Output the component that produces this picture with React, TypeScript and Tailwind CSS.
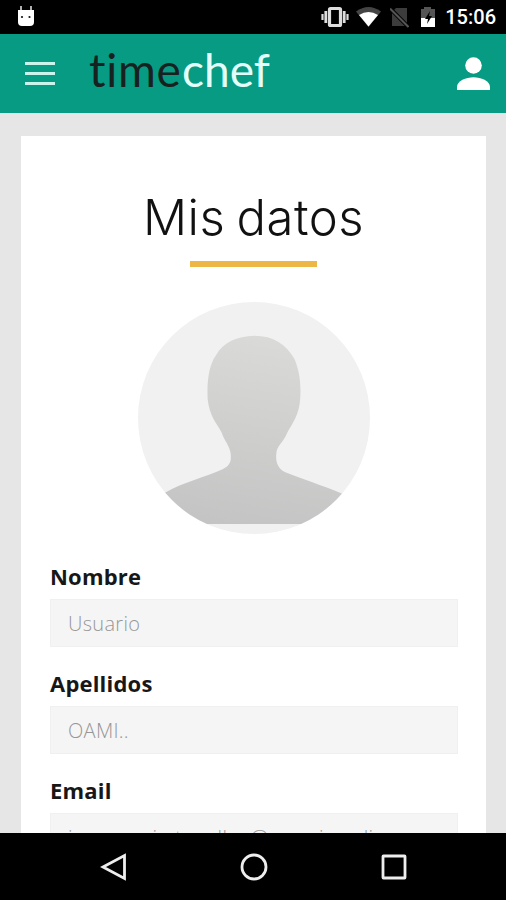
import type { ReactNode } from "react";

type FieldProps = {
    label: string;
    value: string;
};

const Field = ({ label, value }: FieldProps) => {
    return (
        <div className="h-[107px] shrink-0">
            <label className="block h-[37px] text-[22px] leading-[28px] font-bold tracking-[0.2px] text-[#171717]">{label}</label>
            <div className="flex h-[48px] items-center border border-[#f0f0f0] bg-[#f5f5f5] pt-[1px] pl-[17px] text-[20px] font-light tracking-[0.3px] whitespace-nowrap text-[#979797]">{value}</div>
        </div>
    );
};

const StatusBar = () => {
    return (
        <div className="flex h-[34px] shrink-0 items-center bg-black text-white">
            <svg className="mb-[2px] ml-[17px] h-[22px] w-[18px]" viewBox="0 0 18 22">
                <path d="M4 1v5M14 1v5" stroke="#ddd" strokeWidth="1.6" />
                <path d="M1 5h16v12q0 4-4 4H5q-4 0-4-4z" fill="#fff" />
                <circle cx="5" cy="12" r="1.1" fill="#111" />
                <circle cx="12.5" cy="12" r="1.1" fill="#111" />
            </svg>
            <div className="ml-auto flex items-center pr-[10px]">
                <svg className="h-[22px] w-[28px]" viewBox="0 0 28 22">
                    <rect x="8.5" y="2.5" width="11" height="17" rx="1" fill="#000" stroke="#ddd" strokeWidth="3.2" />
                    <path d="M4.8 5v12M23.2 5v12" stroke="#ddd" strokeWidth="2.8" />
                    <path d="M1.5 8v6M26.5 8v6" stroke="#ddd" strokeWidth="2.2" />
                </svg>
                <svg className="ml-[7px] h-[20px] w-[25px]" viewBox="0 0 25 20">
                    <path d="M0 4.5Q12.5-4.5 25 4.5L12.5 20z" fill="#444" />
                    <path d="M3 8Q12.5 2 22 8L12.5 19.5z" fill="#fff" />
                </svg>
                <svg className="ml-[9px] h-[21px] w-[19px]" viewBox="0 0 19 21">
                    <path d="M6 1h11v18H2V5z" fill="#3c3c3c" />
                    <path d="M0 1.5L18.5 20" stroke="#000" strokeWidth="4" />
                    <path d="M0 1.5L18.5 20" stroke="#555" strokeWidth="2" />
                </svg>
                <svg className="ml-[11px] h-[22px] w-[16px]" viewBox="0 0 16 22">
                    <path d="M1 3h3V1h7v2h4v18H1z" fill="#555" />
                    <path d="M1 12h14v9H1z" fill="#fff" />
                    <path d="M10 5l-5 8h3l-1 5 5-8H9z" fill="#000" />
                </svg>
                <span className="ml-[9px] font-['Roboto',sans-serif] text-[20px] leading-[36px] font-medium">15:06</span>
            </div>
        </div>
    );
};

const Header = () => {
    return (
        <header className="flex h-[80px] shrink-0 items-center border-b border-[#d5e9e5] bg-[#079b83]">
            <div className="ml-[25px] flex w-[30px] flex-col gap-[7px]">
                <span className="h-[3px] bg-[#c9f3eb]" />
                <span className="h-[3px] bg-[#c9f3eb]" />
                <span className="h-[3px] bg-[#c9f3eb]" />
            </div>
            <div className="ml-[34px] flex h-full font-['Lato',sans-serif] text-[46px] leading-[71px] [font-variant-ligatures:none]">
                <span className="w-[93px] tracking-[0.7px] text-[#17211f]">time</span>
                <span className="w-[90px] text-[#e4fffa]">chef</span>
            </div>
            <svg className="mr-[16px] ml-auto h-[33px] w-[33px]" viewBox="0 0 33 33" fill="#fff">
                <circle cx="16.5" cy="8.5" r="8.3" />
                <path d="M0 33v-3C0 24 9 20.3 16.5 20.3S33 24 33 30v3z" />
            </svg>
        </header>
    );
};

const Avatar = () => {
    return (
        <svg className="mt-[35px] mb-[1px] ml-[1px] h-[232px] w-[232px] shrink-0 self-center" viewBox="0 0 233 233">
            <defs>
                <linearGradient id="person" x1="0.6" y1="0" x2="0.4" y2="1">
                    <stop offset="0" stopColor="#dadad8" />
                    <stop offset="1" stopColor="#c4c4c4" />
                </linearGradient>
                <clipPath id="round">
                    <circle cx="116.5" cy="116.5" r="116.5" />
                </clipPath>
            </defs>
            <circle cx="116.5" cy="116.5" r="116.5" fill="#f1f1f1" />
            <path
                clipPath="url(#round)"
                fill="url(#person)"
                d="M117 34C136 34 149 43 157 57C161 66 164 79 163 96C162 114 155 122 150 131C146 141 139 145 139 152C138 160 140 167 148 171C165 178 185 184 204 192L233 210V223H0V210L28 191C45 181 68 176 85 168C92 164 94 161 93 152C92 144 87 140 84 131C79 122 72 115 70 98C69 81 71 64 78 54C86 40 99 35 117 34Z"
            />
        </svg>
    );
};

const NavItem = ({ children }: { children: ReactNode }) => {
    return (
        <svg className="h-[28px] w-[28px]" viewBox="0 0 28 28" fill="none" stroke="#eee" strokeWidth="2.8">
            {children}
        </svg>
    );
};

const App = () => {
    return (
        <div className="flex h-[900px] w-[506px] flex-col overflow-hidden bg-[#e6e6e6] font-['Open_Sans',sans-serif]">
            <StatusBar />
            <Header />
            <main className="min-h-0 flex-1 overflow-hidden px-[21px] pt-[22px]">
                <div className="flex h-[760px] w-[465px] flex-col bg-white px-[29px]">
                    <h1 className="mt-[50px] h-[64px] self-center font-['Inter',sans-serif] text-[49px] leading-[64px] font-light tracking-[0.5px] whitespace-nowrap text-[#111] [word-spacing:-3px]">Mis datos</h1>
                    <div className="mt-[11px] h-[6px] w-[127px] shrink-0 self-center bg-[#edb746]" />
                    <Avatar />
                    <div className="mt-[27px] flex w-[408px] flex-col">
                        <Field label="Nombre" value="Usuario" />
                        <Field label="Apellidos" value="OAMI.." />
                        <Field label="Email" value="jesusmarimtonelleo@soamimocli" />
                    </div>
                </div>
            </main>
            <nav className="flex h-[67px] shrink-0 items-center justify-center gap-[112px] bg-black pl-[1px]">
                <NavItem>
                    <path d="M3 14L24.500 2.500v23z" />
                </NavItem>
                <NavItem>
                    <circle cx="14" cy="14" r="12" />
                </NavItem>
                <NavItem>
                    <rect x="3" y="3" width="22" height="22" rx="0.5" />
                </NavItem>
            </nav>
        </div>
    );
};

export default App;
